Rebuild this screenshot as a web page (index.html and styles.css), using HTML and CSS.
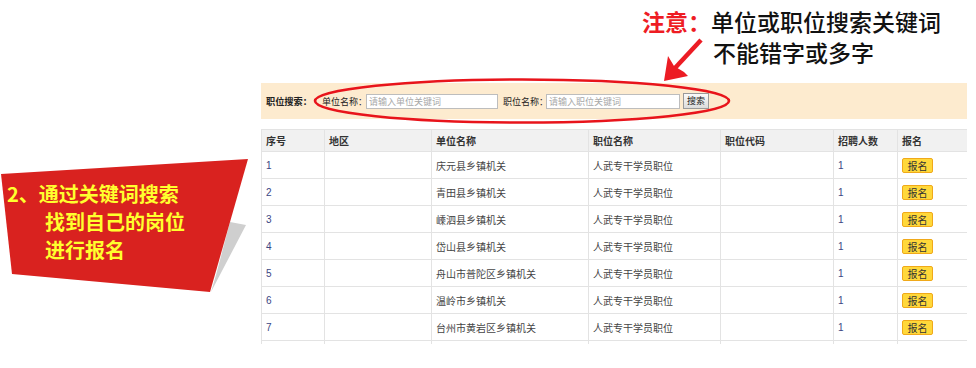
FILE: index.html
```html
<!DOCTYPE html>
<html lang="zh">
<head>
<meta charset="utf-8">
<link rel="stylesheet" href="styles.css">
</head>
<body>
<div class="page">
  <div class="panel">
    <div class="search">
      <b class="search-title">职位搜索：</b>
      <span class="lbl">单位名称：</span>
      <span class="input">请输入单位关键词</span>
      <span class="lbl lbl2">职位名称：</span>
      <span class="input">请输入职位关键词</span>
      <span class="btn">搜索</span>
    </div>
    <table class="grid">
      <colgroup>
        <col class="c1"><col class="c2"><col class="c3"><col class="c4"><col class="c5"><col class="c6"><col class="c7">
      </colgroup>
      <thead>
        <tr><th>序号</th><th>地区</th><th>单位名称</th><th>职位名称</th><th>职位代码</th><th>招聘人数</th><th>报名</th></tr>
      </thead>
      <tbody>
        <tr><td class="num">1</td><td></td><td>庆元县乡镇机关</td><td>人武专干学员职位</td><td></td><td class="num">1</td><td><span class="apply">报名</span></td></tr>
        <tr><td class="num">2</td><td></td><td>青田县乡镇机关</td><td>人武专干学员职位</td><td></td><td class="num">1</td><td><span class="apply">报名</span></td></tr>
        <tr><td class="num">3</td><td></td><td>嵊泗县乡镇机关</td><td>人武专干学员职位</td><td></td><td class="num">1</td><td><span class="apply">报名</span></td></tr>
        <tr><td class="num">4</td><td></td><td>岱山县乡镇机关</td><td>人武专干学员职位</td><td></td><td class="num">1</td><td><span class="apply">报名</span></td></tr>
        <tr><td class="num">5</td><td></td><td>舟山市普陀区乡镇机关</td><td>人武专干学员职位</td><td></td><td class="num">1</td><td><span class="apply">报名</span></td></tr>
        <tr><td class="num">6</td><td></td><td>温岭市乡镇机关</td><td>人武专干学员职位</td><td></td><td class="num">1</td><td><span class="apply">报名</span></td></tr>
        <tr><td class="num">7</td><td></td><td>台州市黄岩区乡镇机关</td><td>人武专干学员职位</td><td></td><td class="num">1</td><td><span class="apply">报名</span></td></tr>
        <tr><td></td><td></td><td></td><td></td><td></td><td></td><td></td></tr>
      </tbody>
    </table>
  </div>

  <svg class="ellipse" width="440" height="56" viewBox="0 0 440 56">
    <ellipse cx="217" cy="23" rx="207" ry="21.5" fill="none" stroke="#e8141b" stroke-width="2.6"/>
  </svg>

  <div class="note">
    <div class="note-line"><span class="note-red">注意：</span>单位或职位搜索关键词</div>
    <div class="note-line note-indent">不能错字或多字</div>
  </div>
  <svg class="arrow" width="50" height="50" viewBox="0 0 50 50">
    <line x1="46" y1="2" x2="20" y2="30" stroke="#ec1c24" stroke-width="4.5" stroke-linecap="butt"/>
    <polygon points="9,43 13,18 19,28 29,34 33,38" fill="#ec1c24"/>
  </svg>

  <svg class="banner" width="252" height="140" viewBox="0 0 252 140">
    <polygon points="230,67 246,70 211,137 216,120" fill="#cfcfcf"/>
    <polygon points="1,19 248,4 210,137 12,119" fill="#d9221f"/>
  </svg>
  <div class="banner-text">
    <div>2、通过关键词搜索</div>
    <div class="bt-indent">找到自己的岗位</div>
    <div class="bt-indent">进行报名</div>
  </div>
</div>
</body>
</html>
```

FILE: styles.css
```css
html, body {
  margin: 0;
  padding: 0;
  background: #ffffff;
}
body {
  font-family: "Noto Sans CJK SC", "Noto Sans", sans-serif;
  color: #333;
}
.page {
  position: relative;
  width: 976px;
  height: 368px;
  overflow: hidden;
}
.panel {
  margin: 83px 0 0 261px;
  width: 706px;
  height: 261px;
  overflow: hidden;
}
.search {
  height: 36px;
  background: #fdebcf;
  display: flex;
  align-items: center;
  font-size: 9px;
  color: #222;
  padding-left: 5px;
}
.search-title {
  font-weight: 700;
  font-size: 9.2px;
  width: 56px;
  flex: none;
}
.lbl {
  width: 44px;
  flex: none;
  white-space: nowrap;
}
.lbl2 {
  margin-left: 5px;
  width: 43px;
}
.input {
  box-sizing: border-box;
  width: 132px;
  height: 15px;
  border: 1px solid #bdbdbd;
  background: #fff;
  color: #a8a8a8;
  font-size: 9px;
  line-height: 13px;
  padding-left: 2px;
  flex: none;
  white-space: nowrap;
}
.lbl2 + .input {
  width: 134px;
}
.btn {
  box-sizing: border-box;
  margin-left: 3px;
  width: 26px;
  height: 16px;
  border: 1px solid #9a9a9a;
  background: linear-gradient(#fafafa, #dcdcdc);
  font-size: 9px;
  line-height: 14px;
  text-align: center;
  color: #222;
  flex: none;
}
.grid {
  margin-top: 10px;
  width: 706px;
  border-collapse: collapse;
  table-layout: fixed;
  font-size: 10px;
}
.c1 { width: 63px; }
.c2 { width: 107px; }
.c3 { width: 157px; }
.c4 { width: 132px; }
.c5 { width: 113px; }
.c6 { width: 64px; }
.c7 { width: 70px; }
.grid th, .grid td {
  border: 1px solid #e3e3e3;
  text-align: left;
  padding: 0 0 0 4px;
  white-space: nowrap;
}
.grid th {
  height: 21px;
  background: #f1f1f1;
  font-weight: 700;
  color: #333;
}
.grid td {
  height: 26px;
  color: #444;
}
.grid td.num {
  color: #3b4683;
  font-family: "Liberation Sans", sans-serif;
}
.apply {
  display: inline-block;
  width: 29px;
  height: 13px;
  line-height: 13px;
  text-align: center;
  background: #ffd83a;
  border: 1px solid #f0a91a;
  border-radius: 2px;
  color: #333;
  font-size: 10px;
}
.ellipse {
  position: absolute;
  left: 305px;
  top: 78px;
}
.note {
  position: absolute;
  left: 642px;
  top: 6px;
  font-size: 23px;
  font-weight: 500;
  color: #111;
  line-height: 31px;
}
.note-red {
  color: #ee1c24;
  font-weight: 700;
}
.note-indent {
  padding-left: 71px;
}
.arrow {
  position: absolute;
  left: 655px;
  top: 38px;
}
.banner {
  position: absolute;
  left: 0;
  top: 155px;
}
.banner-text {
  position: absolute;
  left: 7px;
  top: 180px;
  font-size: 20px;
  font-weight: 700;
  color: #ffff2e;
  line-height: 28px;
}
.bt-indent {
  padding-left: 38px;
}
```
